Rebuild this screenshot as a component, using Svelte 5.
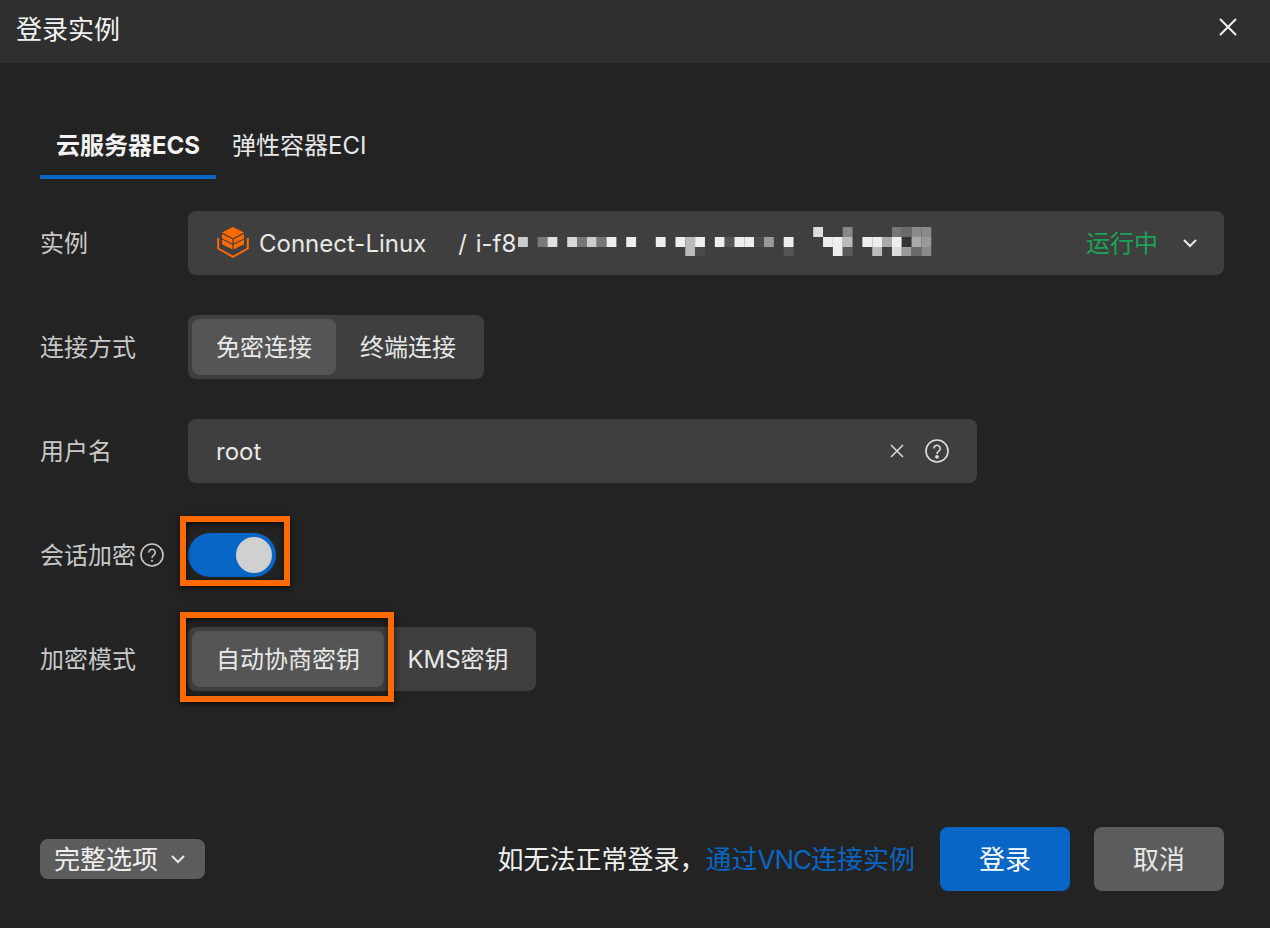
<script>
  // mosaic over the instance id: [col, row, colour]
  const mosaic = [
    [0,1,'#cccccc'],[2,1,'#7a7a7a'],[3,1,'#e0e0e0'],[5,1,'#d8d8d8'],[6,1,'#777777'],[7,1,'#cccccc'],[8,1,'#777777'],[9,1,'#eeeeee'],
    [11,1,'#eeeeee'],[14,1,'#eeeeee'],[16,1,'#eeeeee'],[17,1,'#bbbbbb'],[17,2,'#bbbbbb'],[18,1,'#eeeeee'],[18,2,'#4a4a4a'],
    [20,1,'#eeeeee'],[21,1,'#555555'],[22,1,'#eeeeee'],[23,1,'#eeeeee'],[24,1,'#4a4a4a'],[25,1,'#999999'],
    [27,1,'#eeeeee'],[27,2,'#555555'],[30,0,'#dddddd'],[31,1,'#eeeeee'],[32,1,'#eeeeee'],[32,2,'#eeeeee'],
    [33,0,'#888888'],[33,1,'#bbbbbb'],[33,2,'#5a5a5a'],[35,1,'#eeeeee'],[36,1,'#eeeeee'],[36,2,'#bbbbbb'],[37,1,'#aaaaaa'],
    [38,0,'#777777'],[38,1,'#eeeeee'],[38,2,'#dddddd'],[39,0,'#6a6a6a'],[39,1,'#333333'],[39,2,'#999999'],
    [40,0,'#8a8a8a'],[40,1,'#aaaaaa'],[40,2,'#6a6a6a'],[41,0,'#8a8a8a'],[41,1,'#999999'],[41,2,'#8a8a8a']
  ];
</script>

<div class="dialog">
  <header class="head">
    <h1>登录实例</h1>
    <svg class="close" width="20" height="20" viewBox="0 0 20 20" aria-label="关闭"><path d="M2 2 18 18M18 2 2 18" /></svg>
  </header>

  <main class="body">
    <div class="tabs">
      <div class="tab active">云服务器ECS</div>
      <div class="tab">弹性容器ECI</div>
    </div>

    <div class="form">
      <div class="row">
        <div class="label">实例</div>
        <div class="select">
          <svg class="cube" width="32" height="32" viewBox="0 0 32 32">
            <path class="fill" d="M16 0 27 5.6 16 11.2 5 5.6Z" />
            <path class="fill" d="M5 7 15.4 12.2V16.6L5 11.4ZM27 7 16.6 12.2V16.6L27 11.4ZM5 12.6 15.4 17.8V22.4L5 17.2ZM27 12.6 16.6 17.8V22.4L27 17.2Z" />
            <path class="tray" d="M1.2 11V21.5L16 29.8 30.8 21.5V11" />
          </svg>
          <span class="name">Connect-Linux</span>
          <span class="id">/ i-f8</span>
          <svg class="mosaic" width="414" height="29" viewBox="0 0 414 29">
            {#each mosaic as [c, r, fill]}
              <rect x={c * 9.84} y={r * 10} width="9.84" height="10" {fill} />
            {/each}
          </svg>
          <span class="status">运行中</span>
          <svg class="chev" width="16" height="10" viewBox="0 0 16 10"><path d="M2 2 8 8 14 2" /></svg>
        </div>
      </div>

      <div class="row">
        <div class="label">连接方式</div>
        <div class="seg">
          <div class="opt on w1">免密连接</div>
          <div class="opt w1">终端连接</div>
        </div>
      </div>

      <div class="row">
        <div class="label">用户名</div>
        <div class="input">
          <span>root</span>
          <svg class="clear" width="16" height="16" viewBox="0 0 16 16"><path d="M2 2 14 14M14 2 2 14" /></svg>
          <svg class="help big" width="24" height="24" viewBox="0 0 24 24">
            <circle cx="12" cy="12" r="11" />
            <path d="M8.8 9.4a3.2 3.2 0 1 1 5 2.7c-1.1.8-1.8 1.4-1.8 2.8" />
            <circle class="dot" cx="12" cy="17.8" r="1.1" />
          </svg>
        </div>
      </div>

      <div class="row">
        <div class="label">会话加密
          <svg class="help tip" width="24" height="24" viewBox="0 0 24 24">
            <circle cx="12" cy="12" r="11" />
            <path d="M8.8 9.4a3.2 3.2 0 1 1 5 2.7c-1.1.8-1.8 1.4-1.8 2.8" />
            <circle class="dot" cx="12" cy="17.8" r="1.1" />
          </svg>
        </div>
        <div class="mark-wrap">
          <div class="toggle"><div class="knob"></div></div>
          <div class="mark mark-toggle"></div>
        </div>
      </div>

      <div class="row">
        <div class="label">加密模式</div>
        <div class="mark-wrap">
          <div class="seg">
            <div class="opt on w2">自动协商密钥</div>
            <div class="opt w3">KMS密钥</div>
          </div>
          <div class="mark mark-seg"></div>
        </div>
      </div>
    </div>

    <footer class="foot">
      <div class="more">完整选项
        <svg class="chev" width="16" height="10" viewBox="0 0 16 10"><path d="M2 2 8 8 14 2" /></svg>
      </div>
      <div class="hint">如无法正常登录，<span class="link">通过<span class="vnc">VNC</span>连接实例</span></div>
      <div class="btn primary">登录</div>
      <div class="btn">取消</div>
    </footer>
  </main>
</div>

<style>
  :global(body) { background: #232323; }
  .dialog {
    height: 928px;
    display: flex;
    flex-direction: column;
    overflow: hidden;
    background: #232323;
    color: #e8e8e8;
    font-family: Inter, "Noto Sans CJK SC", sans-serif;
    font-size: 24px;
  }
  .head {
    height: 63px;
    flex: none;
    box-sizing: border-box;
    display: flex;
    align-items: center;
    justify-content: space-between;
    padding: 0 32px 9px 16px;
    background: #2f2f2f;
  }
  h1 { margin: 0; font-size: 26px; font-weight: 400; color: #f2f2f2; }
  .close path { stroke: #f0f0f0; stroke-width: 2; fill: none; }

  .body {
    flex: 1;
    display: flex;
    flex-direction: column;
    padding: 52px 46px 37px 40px;
  }
  .tabs { display: flex; height: 64px; }
  .tab { padding: 0 16px; line-height: 62px; color: #e8e8e8; }
  .tab.active { font-weight: 700; color: #f2f2f2; box-shadow: inset 0 -4px 0 #0866c6; }

  .form { margin-top: 32px; display: flex; flex-direction: column; gap: 40px; }
  .row { display: flex; align-items: center; height: 64px; }
  .label { width: 148px; flex: none; display: flex; align-items: center; gap: 4px; padding-bottom: 3px; color: #c8c8c8; white-space: nowrap; }
  .tip { margin-top: 3px; }

  .select {
    flex: 1;
    height: 64px;
    display: flex;
    align-items: center;
    padding: 0 26px 0 29px;
    background: #3f3f3f;
    border-radius: 8px;
  }
  .cube { margin-right: 10px; flex: none; }
  .cube .fill { fill: #ff6a00; }
  .cube .tray { fill: none; stroke: #ff6a00; stroke-width: 2; }
  .name { color: #e8e8e8; }
  .id { margin-left: 32px; width: 60px; flex: none; color: #e8e8e8; white-space: nowrap; word-spacing: 2px; }
  .mosaic { margin-bottom: 3px; flex: none; }
  .status { margin-left: auto; margin-right: 24px; padding-bottom: 3px; color: #1aa456; }
  .chev path { fill: none; stroke: #e8e8e8; stroke-width: 2; }

  .seg { display: flex; height: 64px; padding: 4px; box-sizing: border-box; background: #3f3f3f; border-radius: 8px; }
  .opt { display: flex; align-items: center; justify-content: center; padding-bottom: 3px; box-sizing: border-box; border-radius: 8px; color: #e8e8e8; }
  .opt.on { background: #555555; }
  .w1 { width: 144px; }
  .w2 { width: 192px; }
  .w3 { width: 148px; }

  .input {
    width: 789px;
    height: 64px;
    box-sizing: border-box;
    display: flex;
    align-items: center;
    padding: 0 28px;
    background: #3f3f3f;
    border-radius: 8px;
    color: #e8e8e8;
  }
  .clear { margin-left: auto; margin-right: 20px; }
  .clear path { stroke: #d8d8d8; stroke-width: 1.6; fill: none; }
  .help circle { fill: none; stroke: #c8c8c8; stroke-width: 1.6; }
  .help path { fill: none; stroke: #c8c8c8; stroke-width: 1.6; }
  .help .dot { fill: #c8c8c8; stroke: none; }
  .help.big circle, .help.big path { stroke: #e0e0e0; }
  .help.big .dot { fill: #e0e0e0; }

  .mark-wrap { position: relative; display: flex; align-items: center; }
  .toggle {
    width: 88px;
    height: 44px;
    box-sizing: border-box;
    padding: 4px;
    display: flex;
    justify-content: flex-end;
    background: #0866c6;
    border-radius: 22px;
  }
  .knob { width: 36px; height: 36px; border-radius: 50%; background: #d0d0d0; }
  .mark {
    position: absolute;
    box-sizing: border-box;
    border: 6px solid #ff6a00;
    box-shadow: 0 2px 6px rgba(0, 0, 0, 0.7), inset 0 2px 6px rgba(0, 0, 0, 0.7);
  }
  .mark-toggle { left: -8px; top: -17px; width: 110px; height: 70px; }
  .mark-seg { left: -8px; top: -15px; width: 214px; height: 90px; }

  .foot { margin-top: auto; display: flex; align-items: center; font-size: 26px; }
  .more {
    display: flex;
    align-items: center;
    gap: 12px;
    height: 40px;
    padding: 0 19px 3px 14px;
    box-sizing: border-box;
    background: #5c5c5c;
    border-radius: 8px;
    color: #f0f0f0;
  }
  .more .chev { margin-top: 3px; }
  .hint { margin-left: auto; margin-right: 25px; padding-bottom: 3px; color: #f0f0f0; }
  .link { color: #0a66c4; }
  .vnc { letter-spacing: -1px; }
  .btn {
    width: 130px;
    height: 64px;
    box-sizing: border-box;
    padding-bottom: 3px;
    display: flex;
    align-items: center;
    justify-content: center;
    background: #5c5c5c;
    border-radius: 8px;
    color: #e8e8e8;
  }
  .btn.primary { margin-right: 24px; background: #0866c6; color: #fff; }
</style>
